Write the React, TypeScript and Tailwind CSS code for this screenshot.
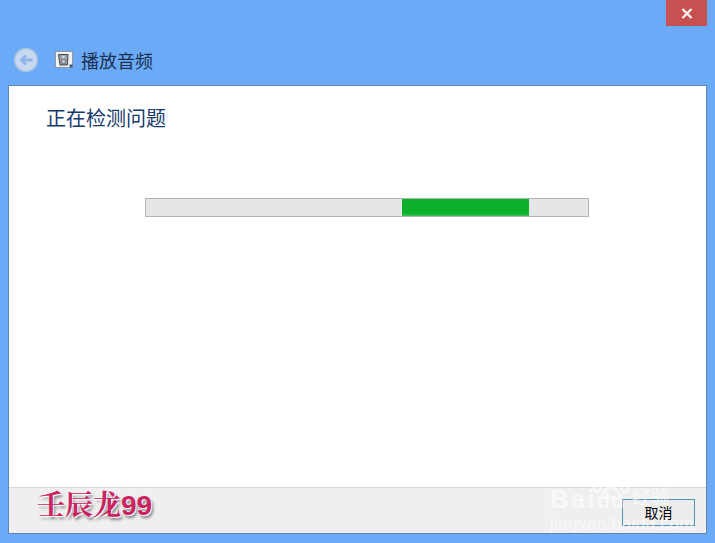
const cjk = "font-['Noto_Sans_CJK_SC','Noto_Sans_CJK_JP',sans-serif]";

const BackButton = () => (
  <svg width="26" height="26" viewBox="0 0 26 26">
    <circle cx="13" cy="13" r="11.5" fill="#c6d9f0" stroke="#a5bfdf" strokeWidth="1.5" />
    <path d="M19.5 13H9M13 8.5L8.5 13l4.5 4.5" fill="none" stroke="#8fb4e6" strokeWidth="3" />
  </svg>
);

const SpeakerIcon = () => (
  <svg width="18" height="18" viewBox="0 0 18 18">
    <rect x="0.5" y="0.5" width="17" height="16" fill="#f2f3f1" stroke="#8c97a3" />
    <path d="M3.5 3.5h9.5l-0.5 10.5H5z" fill="#9aa1a6" stroke="#41474e" />
    <circle cx="8.5" cy="6" r="1.2" fill="#dde1e3" />
    <circle cx="8.5" cy="10.5" r="2.2" fill="#c4c9cc" stroke="#4a5058" strokeWidth="0.7" />
    <rect x="14.5" y="13.5" width="3" height="3" fill="#3d5a80" />
  </svg>
);

const Paw = () => (
  <svg width="38" height="24" viewBox="0 0 38 24" fill="none" stroke="#ffffff" strokeOpacity="0.7" strokeWidth="2">
    <ellipse cx="5" cy="12" rx="3.5" ry="5" />
    <ellipse cx="13" cy="5" rx="3.5" ry="4.5" />
    <ellipse cx="25" cy="5" rx="3.5" ry="4.5" />
    <ellipse cx="33" cy="12" rx="3.5" ry="5" />
    <path d="M19 12c-4 0-5 3-8 6-2 3 0 6 4 5 2 0 3-1 4-1s2 1 4 1c4 1 6-2 4-5-3-3-4-6-8-6z" />
  </svg>
);

export default function App() {
  return (
    <div className={`relative flex h-[543px] w-[715px] flex-col overflow-hidden bg-[#6aaaf6] px-2 pb-[9px] ${cjk}`}>
      <div className="flex h-[85px] shrink-0 flex-col">
        <div className="flex justify-end">
          <div className="flex h-[26px] w-[41px] items-center justify-center bg-[#c75050]">
            <svg width="12" height="11" viewBox="0 0 12 11">
              <path d="M1.5 1l9 9M10.5 1l-9 9" stroke="#f7eeee" strokeWidth="2.4" />
            </svg>
          </div>
        </div>
        <div className="mt-[21px] flex items-center">
          <div className="ml-[5px]"><BackButton /></div>
          <div className="ml-[16px]"><SpeakerIcon /></div>
          <span className="ml-[8px] text-[18px] leading-[26px] text-[#1c2f4e]">播放音频</span>
        </div>
      </div>

      <div className="flex min-h-0 flex-1 flex-col border border-[#5f86b3] bg-white">
        <div className="flex-1">
          <h1 className="ml-[37px] mt-[18px] text-[20px] font-normal leading-[28px] text-[#153a6e]">正在检测问题</h1>
          <div className="ml-[136px] mt-[66px] flex h-[19px] w-[444px] border border-[#b4b4b4] bg-[#e6e6e6]">
            <div className="ml-[256px] h-[17px] w-[127px] bg-[linear-gradient(#0eb02c_85%,#3cc257)]" />
          </div>
        </div>
        <div className="flex h-[46px] shrink-0 items-center justify-end border-t border-[#d9d9d9] bg-[#efefef] pr-[11px]">
          <button className="mt-[3px] h-[27px] w-[73px] border border-[#4f93bd] bg-[#ececec] text-[14px] text-black">取消</button>
        </div>
      </div>

      <div className="absolute left-[37px] top-[489px] font-['Liberation_Serif','Noto_Serif_CJK_SC','Noto_Sans_CJK_SC',serif] text-[28px] font-bold leading-[34px] text-[#c9245f] [text-shadow:0_0_2px_#fff,1px_1px_1px_#fff,2px_3px_3px_#777]">
        壬辰龙<span className="font-['Liberation_Sans',sans-serif]">99</span>
      </div>

      <div className="pointer-events-none absolute left-[550px] top-[475px] h-[58px] w-[130px] text-white/60">
        <span className="absolute left-0 top-[10px] font-['Liberation_Sans',sans-serif] text-[26px] font-bold leading-[28px] tracking-[2px]">Bai</span>
        <span className="absolute left-[47px] top-[13px] font-['Liberation_Sans',sans-serif] text-[22px] font-bold leading-[26px]">du</span>
        <div className="absolute left-[42px] top-0"><Paw /></div>
        <span className="absolute left-[82px] top-[9px] text-[19px] leading-[24px]">经验</span>
        <span className="absolute left-0 top-[40px] font-['Liberation_Sans',sans-serif] text-[17px] leading-[18px] tracking-[0.4px]">jingyan.baidu.com</span>
      </div>
    </div>
  );
}
